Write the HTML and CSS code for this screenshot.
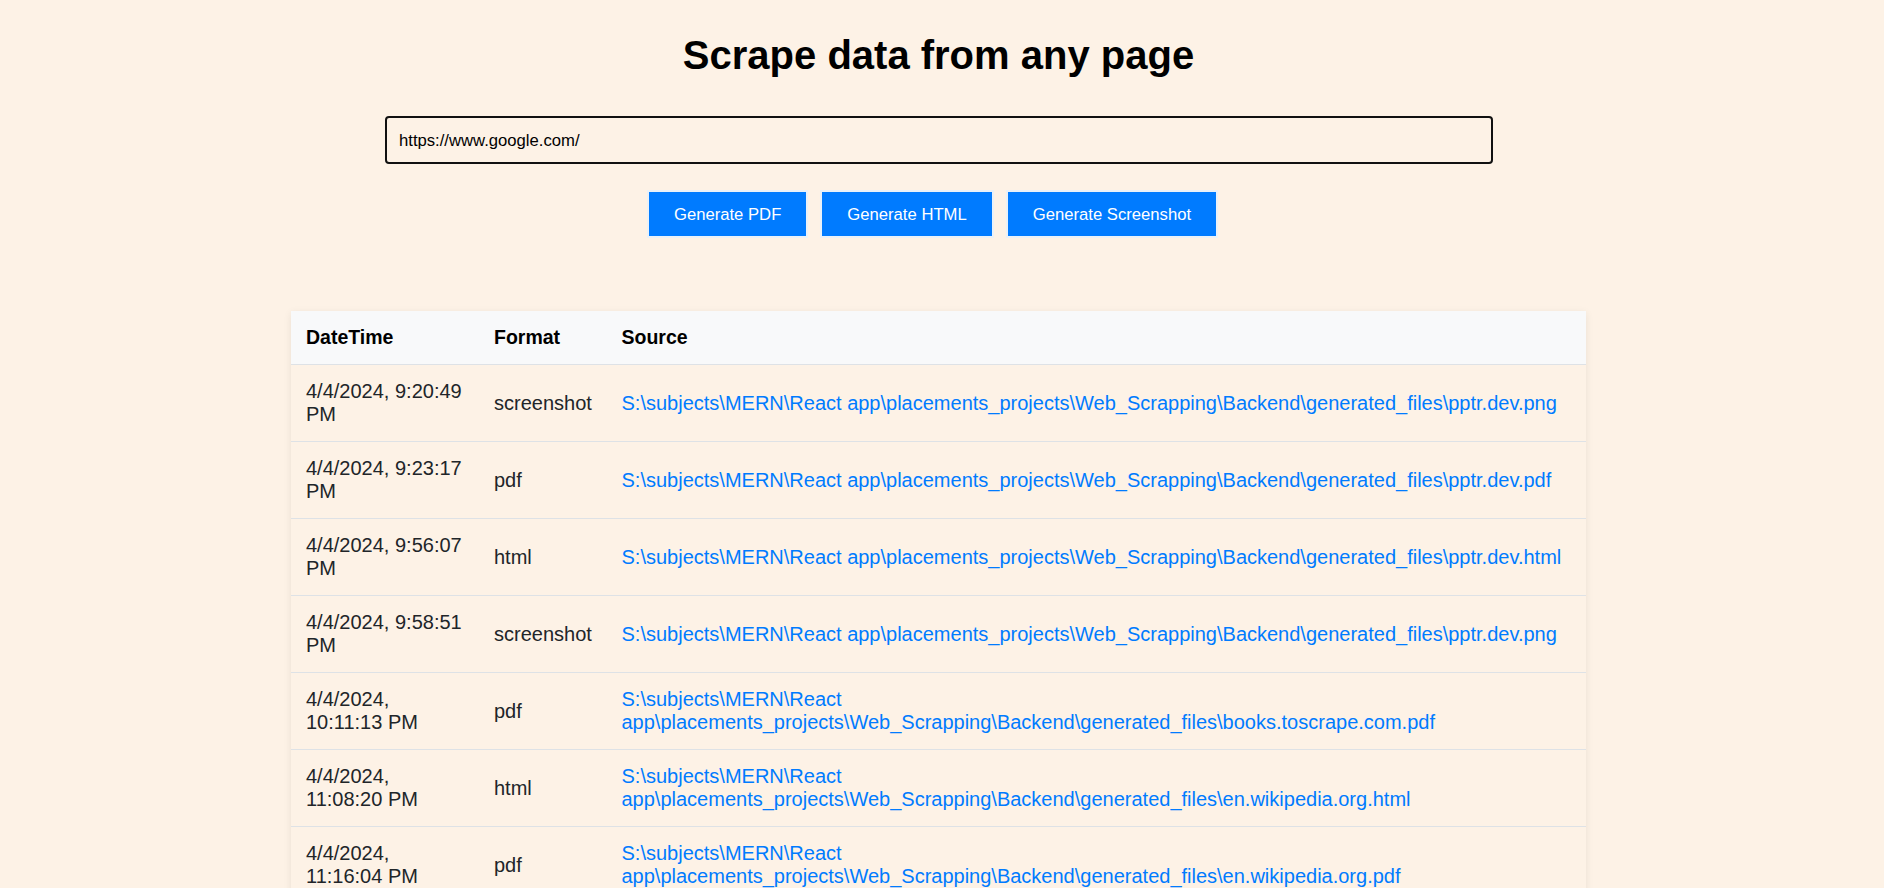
FILE: index.html
```html
<!DOCTYPE html>
<html lang="en">
<head>
<meta charset="utf-8">
<title>Scrape data from any page</title>
<link rel="stylesheet" href="styles.css">
</head>
<body>
<div class="page">
  <h1 class="title">Scrape data from any page</h1>
  <input class="url-input" type="text" value="https://www.google.com/">
  <div class="actions">
    <button class="btn">Generate PDF</button>
    <button class="btn">Generate HTML</button>
    <button class="btn">Generate Screenshot</button>
  </div>
  <table class="history">
    <colgroup>
      <col class="col-date">
      <col class="col-format">
      <col class="col-source">
    </colgroup>
    <thead>
      <tr><th>DateTime</th><th>Format</th><th>Source</th></tr>
    </thead>
    <tbody>
      <tr><td>4/4/2024, 9:20:49 PM</td><td>screenshot</td><td><a class="src" href="#">S:\subjects\MERN\React app\placements_projects\Web_Scrapping\Backend\generated_files\pptr.dev.png</a></td></tr>
      <tr><td>4/4/2024, 9:23:17 PM</td><td>pdf</td><td><a class="src" href="#">S:\subjects\MERN\React app\placements_projects\Web_Scrapping\Backend\generated_files\pptr.dev.pdf</a></td></tr>
      <tr><td>4/4/2024, 9:56:07 PM</td><td>html</td><td><a class="src" href="#">S:\subjects\MERN\React app\placements_projects\Web_Scrapping\Backend\generated_files\pptr.dev.html</a></td></tr>
      <tr><td>4/4/2024, 9:58:51 PM</td><td>screenshot</td><td><a class="src" href="#">S:\subjects\MERN\React app\placements_projects\Web_Scrapping\Backend\generated_files\pptr.dev.png</a></td></tr>
      <tr><td>4/4/2024, 10:11:13 PM</td><td>pdf</td><td><a class="src" href="#">S:\subjects\MERN\React app\placements_projects\Web_Scrapping\Backend\generated_files\books.toscrape.com.pdf</a></td></tr>
      <tr><td>4/4/2024, 11:08:20 PM</td><td>html</td><td><a class="src" href="#">S:\subjects\MERN\React app\placements_projects\Web_Scrapping\Backend\generated_files\en.wikipedia.org.html</a></td></tr>
      <tr><td>4/4/2024, 11:16:04 PM</td><td>pdf</td><td><a class="src" href="#">S:\subjects\MERN\React app\placements_projects\Web_Scrapping\Backend\generated_files\en.wikipedia.org.pdf</a></td></tr>
    </tbody>
  </table>
</div>
</body>
</html>
```
FILE: styles.css
```css
html, body {
  margin: 0;
  padding: 0;
  background: #fdf2e6;
}

body {
  font-family: "Liberation Sans", Arial, sans-serif;
  color: #000;
}

.page {
  width: 1877px;
  display: flex;
  flex-direction: column;
  align-items: center;
  padding-top: 32px;
}

.title {
  margin: 0;
  font-size: 40px;
  font-weight: bold;
  line-height: 46px;
  color: #000;
}

.url-input {
  box-sizing: border-box;
  width: 1108px;
  margin-top: 38px;
  padding: 12.5px;
  border: 2px solid #111;
  border-radius: 4px;
  background: transparent;
  font-family: "Liberation Sans", Arial, sans-serif;
  font-size: 16.67px;
  line-height: 19px;
  color: #000;
  outline: none;
}

.actions {
  display: flex;
  justify-content: center;
  margin-top: 26px;
}

.btn {
  margin-right: 12px;
  padding: 12.5px 25px;
  border: 2px solid #eaf1f8;
  background: #007bff;
  color: #fff;
  font-family: "Liberation Sans", Arial, sans-serif;
  font-size: 16.67px;
  line-height: 19px;
  cursor: pointer;
}

.history {
  width: 1295px;
  margin-top: 73px;
  border-collapse: collapse;
  table-layout: fixed;
  box-shadow: 0 2px 8px rgba(0, 0, 0, 0.08);
}

.col-date { width: 188px; }
.col-format { width: 127.5px; }
.col-source { width: auto; }

.history th,
.history td {
  padding: 15px;
  text-align: left;
  vertical-align: middle;
  line-height: 23px;
  border-bottom: 1px solid #dee2e6;
}

.history th {
  background: #f8f9fa;
  font-size: 19.5px;
  font-weight: bold;
  color: #000;
}

.history td {
  font-size: 20px;
  color: #212529;
}

.src {
  color: #007bff;
  text-decoration: none;
}
```
